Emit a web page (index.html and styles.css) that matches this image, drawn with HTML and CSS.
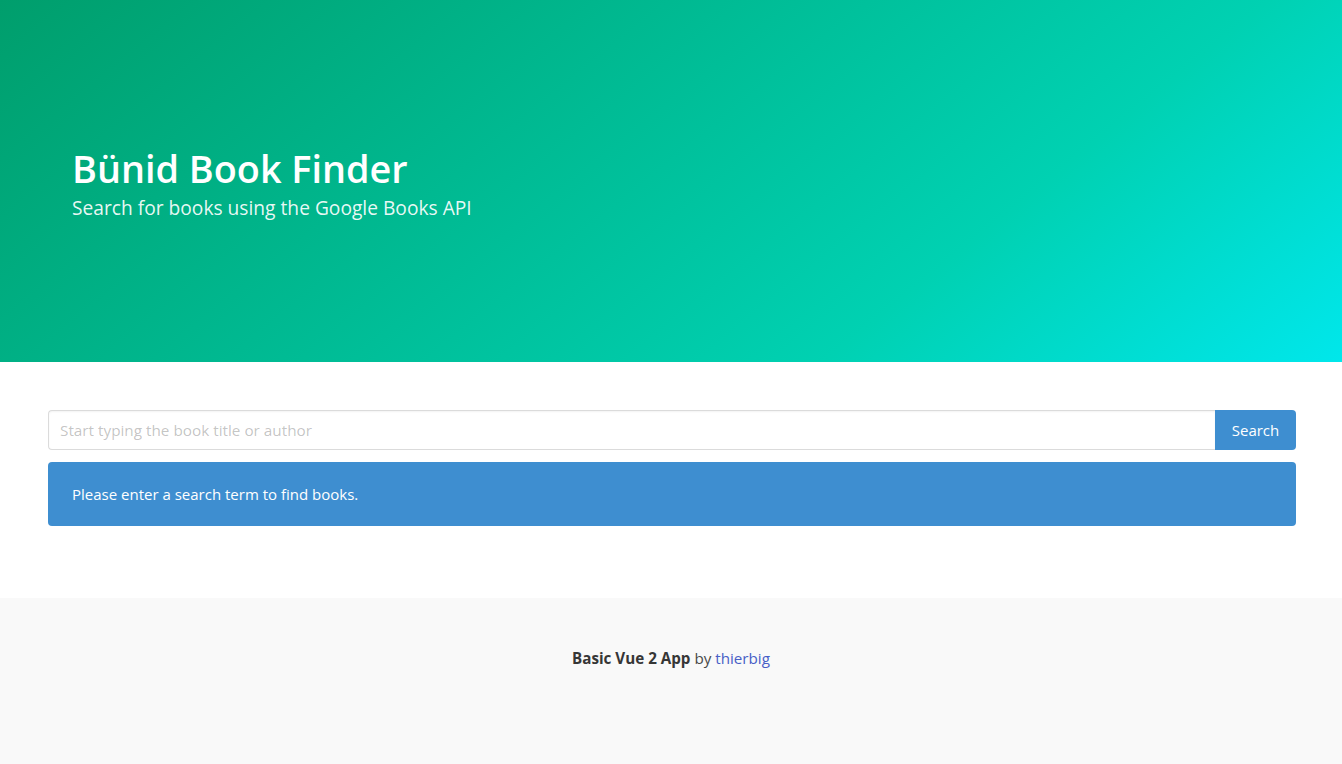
FILE: index.html
```html
<!DOCTYPE html>
<html lang="en">
<head>
<meta charset="utf-8">
<title>Bünid Book Finder</title>
<link rel="stylesheet" href="styles.css">
</head>
<body>
<section class="hero">
  <div class="hero-body">
    <h1 class="title">Bünid Book Finder</h1>
    <h2 class="subtitle">Search for books using the Google Books API</h2>
  </div>
</section>
<section class="section">
  <div class="field">
    <input class="input" type="text" placeholder="Start typing the book title or author">
    <button class="button">Search</button>
  </div>
  <div class="notification">Please enter a search term to find books.</div>
</section>
<footer class="footer">
  <p><strong>Basic Vue 2 App</strong> by <a href="#">thierbig</a></p>
</footer>
</body>
</html>
```
FILE: styles.css
```css
html, body {
  margin: 0;
  padding: 0;
}
body {
  font-family: "Open Sans", "Noto Sans", sans-serif;
  font-size: 16px;
  line-height: 1.5;
  color: #4a4a4a;
  background: #fff;
}
.hero {
  background-image: linear-gradient(141deg, #009e6c 0%, #00d1b2 71%, #00e7eb 100%);
  color: #fff;
}
.hero-body {
  padding: 146px 72px 142px;
}
.title {
  margin: 0 0 4px;
  font-size: 37.8px;
  font-weight: 600;
  line-height: 45px;
  color: #fff;
}
.subtitle {
  margin: 0;
  font-size: 19.2px;
  font-weight: 400;
  line-height: 25px;
  color: rgba(255,255,255,0.92);
}
.section {
  padding: 48px 46px 48px 48px;
}
.field {
  display: flex;
  margin-bottom: 12px;
}
.input {
  flex: 1;
  height: 40px;
  box-sizing: border-box;
  border: 1px solid #dbdbdb;
  border-right: none;
  border-radius: 4px 0 0 4px;
  padding: 0 11px;
  font-family: inherit;
  font-size: 15.3px;
  color: #363636;
  box-shadow: inset 0 0.0625em 0.125em rgba(10,10,10,0.05);
  outline: none;
}
.input::placeholder {
  color: rgba(54,54,54,0.3);
}
.button {
  height: 40px;
  width: 81px;
  border: none;
  border-radius: 0 4px 4px 0;
  background: #3e8ed0;
  color: #fff;
  font-family: inherit;
  font-size: 15px;
  padding: 0;
  cursor: pointer;
}
.notification {
  background: #3e8ed0;
  color: #fff;
  border-radius: 4px;
  padding: 20px 40px 20px 24px;
  font-size: 15px;
  line-height: 24px;
  margin-bottom: 24px;
}
.footer {
  background: #f9f9f9;
  padding: 48px 24px 94px;
  text-align: center;
  font-size: 15.2px;
  line-height: 24px;
}
.footer p {
  margin: 0;
}
.footer strong {
  color: #363636;
  font-weight: 700;
}
.footer a {
  color: #485fc7;
  text-decoration: none;
}
```
